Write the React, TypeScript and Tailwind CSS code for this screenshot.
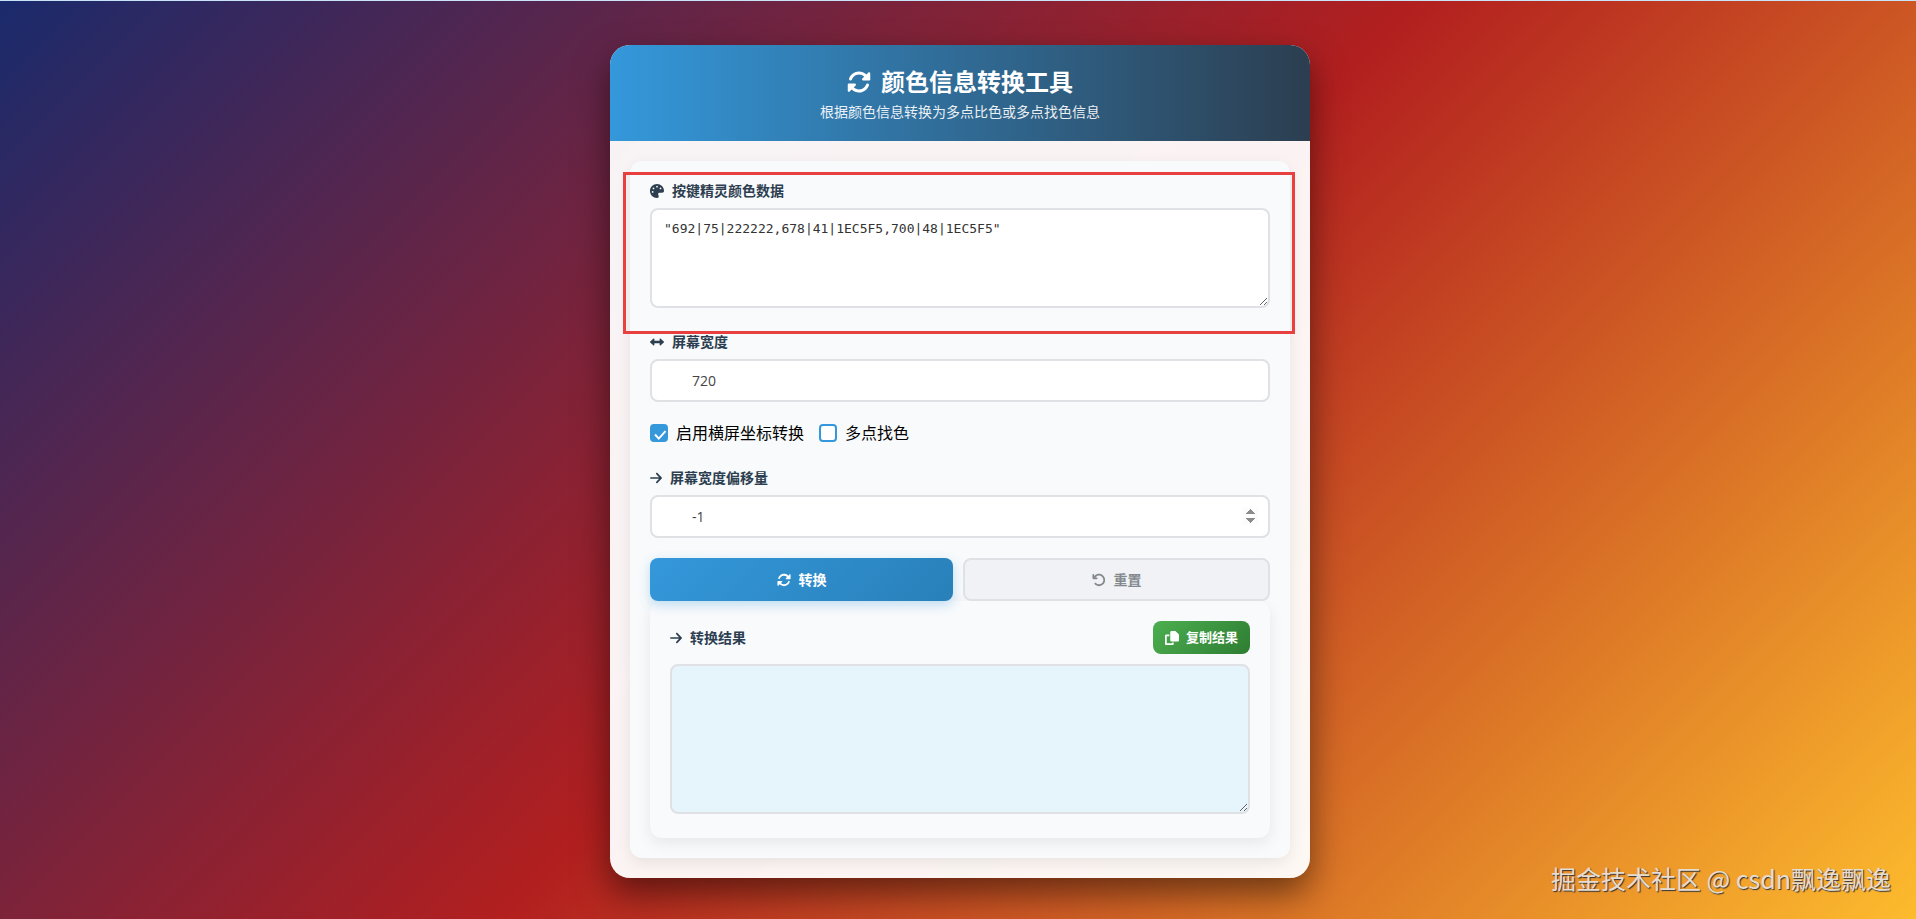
import { useState } from "react";
import type { ReactNode } from "react";
import { FaArrowRight, FaArrowRotateLeft, FaLeftRight, FaPalette, FaRotate } from "react-icons/fa6";

interface FieldLabelProps {
  htmlFor: string;
  icon: ReactNode;
  children: ReactNode;
}

function FieldLabel({ htmlFor, icon, children }: FieldLabelProps) {
  return (
    <label htmlFor={htmlFor} className="flex h-[19px] items-center gap-2 text-sm font-semibold text-[#2c3e50]">
      {icon}
      {children}
    </label>
  );
}

interface CheckOptionProps {
  label: string;
  checked: boolean;
  onChange: (checked: boolean) => void;
}

function CheckOption({ label, checked, onChange }: CheckOptionProps) {
  return (
    <label className="flex items-center gap-2 text-base leading-[22px] text-black">
      <span className="grid size-[18px] place-items-center">
        <input
          type="checkbox"
          checked={checked}
          onChange={(e) => onChange(e.target.checked)}
          className="peer col-start-1 row-start-1 size-[18px] appearance-none rounded border-2 border-[#3498db] bg-white checked:bg-[#3498db]"
        />
        <svg
          viewBox="0 0 18 18"
          className="pointer-events-none invisible col-start-1 row-start-1 size-[18px] peer-checked:visible"
          fill="none"
          stroke="white"
          strokeWidth="2"
        >
          <path d="M5 10.5 8.8 14.6 15.5 7.2" />
        </svg>
      </span>
      {label}
    </label>
  );
}

function CopyIcon() {
  return (
    <svg viewBox="0 0 512 512" className="size-[14px]" fill="currentColor" aria-hidden="true">
      <path d="M240 0h124c12.700 0 24.900 5.100 33.900 14.100l99.900 99.900c9 9 14.200 21.200 14.200 33.900V336c0 26.500-21.500 48-48 48H240c-26.500 0-48-21.500-48-48V48c0-26.500 21.500-48 48-48zM48 128h112v64H64v256h192v-32h64v48c0 26.500-21.500 48-48 48H48c-26.500 0-48-21.500-48-48V176c0-26.500 21.500-48 48-48z" />
    </svg>
  );
}

const initialData = '"692|75|222222,678|41|1EC5F5,700|48|1EC5F5"';

export default function App() {
  const [data, setData] = useState(initialData);
  const [width, setWidth] = useState("720");
  const [offset, setOffset] = useState("-1");
  const [landscape, setLandscape] = useState(true);
  const [multiPoint, setMultiPoint] = useState(false);
  const [result, setResult] = useState("");

  const handleConvert = () => {
    const points = data
      .replace(/"/g, "")
      .split(",")
      .map((point) => {
        const [x, y, color] = point.split("|");
        if (!landscape) return [x, y, color].join("|");
        return [y, Number(width) - Number(x) + Number(offset), color].join("|");
      });
    if (!multiPoint) return setResult(`"${points.join(",")}"`);
    const [first, ...rest] = points;
    setResult(`"${first.split("|")[2]}","${rest.join(",")}"`);
  };

  const handleReset = () => {
    setData("");
    setWidth("720");
    setOffset("-1");
    setResult("");
  };

  return (
    <div className="relative min-h-screen border-t border-[#c9e3f8] bg-linear-[135deg,#1a2a6c,#b21f1f,#fdbb2d] pt-11 pr-0 pb-10 pl-1 font-['Open_Sans','Noto_Sans_CJK_SC',sans-serif]">
      <main className="mx-auto max-w-[700px] rounded-[20px] bg-white/95 shadow-[0_15px_35px_rgba(0,0,0,0.5)]">
        <header className="rounded-t-[20px] bg-linear-[90deg,#3498db,#2c3e50] p-5 text-center text-white">
          <h1 className="mb-[3px] flex h-[34px] items-center justify-center gap-[10px] text-2xl font-bold">
            <FaRotate />
            颜色信息转换工具
          </h1>
          <p className="text-sm leading-[19px] opacity-90">根据颜色信息转换为多点比色或多点找色信息</p>
        </header>

        <div className="p-5">
          <section className="relative rounded-xl bg-[#f8fafb] p-5 shadow-[0_5px_15px_rgba(0,0,0,0.08)]">
            <div className="mb-6 flex flex-col gap-2">
              <FieldLabel htmlFor="colorData" icon={<FaPalette />}>按键精灵颜色数据</FieldLabel>
              <textarea
                id="colorData"
                value={data}
                onChange={(e) => setData(e.target.value)}
                className="h-[100px] w-full resize-y rounded-lg border-2 border-[#dfe1e4] bg-white px-3 py-2 font-['DejaVu_Sans_Mono',monospace] text-[13px] leading-[22px] text-[#333] outline-none"
              />
            </div>

            <div className="mb-5 flex flex-col gap-2">
              <FieldLabel htmlFor="screenWidth" icon={<FaLeftRight />}>屏幕宽度</FieldLabel>
              <input
                id="screenWidth"
                type="text"
                inputMode="numeric"
                value={width}
                onChange={(e) => setWidth(e.target.value)}
                className="h-[43px] w-full rounded-lg border-2 border-[#dfe1e4] bg-white pr-3 pl-10 text-sm text-[#444] outline-none"
              />
            </div>

            <div className="mb-6 flex h-[22px] items-center gap-[15px]">
              <CheckOption label="启用横屏坐标转换" checked={landscape} onChange={setLandscape} />
              <CheckOption label="多点找色" checked={multiPoint} onChange={setMultiPoint} />
            </div>

            <div className="mb-5 flex flex-col gap-2">
              <FieldLabel htmlFor="widthOffset" icon={<FaArrowRight className="w-3" />}>屏幕宽度偏移量</FieldLabel>
              <input
                id="widthOffset"
                type="number"
                value={offset}
                onChange={(e) => setOffset(e.target.value)}
                className="h-[43px] w-full rounded-lg border-2 border-[#dfe1e4] bg-white pr-[10px] pl-10 text-sm text-[#444] outline-none [&::-webkit-inner-spin-button]:opacity-100"
              />
            </div>

            <div className="flex gap-[10px] text-sm font-semibold">
              <button
                onClick={handleConvert}
                className="flex h-[43px] flex-1 items-center justify-center gap-2 rounded-lg bg-linear-[135deg,#3498db,#2980b9] text-white shadow-[0_4px_12px_rgba(52,152,219,0.3)]"
              >
                <FaRotate />
                转换
              </button>
              <button
                onClick={handleReset}
                className="flex h-[43px] flex-1 items-center justify-center gap-2 rounded-lg border-2 border-[#dfe1e4] bg-[#f0f2f5] text-[#84898e]"
              >
                <FaArrowRotateLeft />
                重置
              </button>
            </div>

            <div className="rounded-xl bg-[#f9fafc] px-5 pt-5 pb-6 shadow-[0_5px_15px_rgba(0,0,0,0.08)]">
              <div className="mb-[10px] flex items-center justify-between">
                <FieldLabel htmlFor="result" icon={<FaArrowRight className="w-3" />}>转换结果</FieldLabel>
                <button
                  onClick={() => navigator.clipboard.writeText(result)}
                  className="flex h-[33px] items-center gap-[7px] rounded-lg bg-linear-[135deg,#4caf50,#2e7d32] px-3 text-[13px] font-semibold text-white"
                >
                  <CopyIcon />
                  复制结果
                </button>
              </div>
              <textarea
                id="result"
                readOnly
                value={result}
                className="block h-[150px] w-full resize-y rounded-lg border-2 border-[#dfe1e4] bg-[#e6f4fb] px-3 py-2 font-['DejaVu_Sans_Mono',monospace] text-[13px] leading-[22px] text-[#333] outline-none"
              />
            </div>

            {/* highlight frame around the input data */}
            <div className="pointer-events-none absolute top-[11px] -right-[5px] -left-[7px] h-[162px] border-3 border-[#e8403f]" />
          </section>
        </div>
      </main>

      <p className="absolute right-[25px] bottom-[22px] font-['Noto_Sans_CJK_SC',sans-serif] text-[25px] leading-[38px] text-[#e6dcd2] [text-shadow:1px_1px_1px_#333]">
        掘金技术社区 @ csdn飘逸飘逸
      </p>
    </div>
  );
}
